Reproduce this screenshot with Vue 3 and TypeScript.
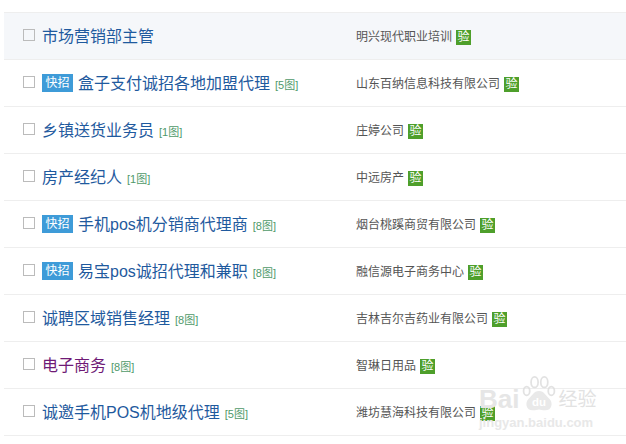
<template>
  <div class="page">
    <ul class="job-list">
      <li
        v-for="job in jobs"
        :key="job.title"
        class="job-row"
        :class="{ active: job.active }"
      >
        <div class="job-main">
          <span class="check"></span>
          <span v-if="job.quick" class="quick">快招</span>
          <a class="title" :class="{ visited: job.visited }">{{ job.title }}</a>
          <span v-if="job.pics" class="pics">[{{ job.pics }}图]</span>
        </div>
        <div class="job-company">
          <span class="company">{{ job.company }}</span>
          <span class="verified">验</span>
        </div>
      </li>
    </ul>

    <div class="watermark">
      <div class="wm-top">
        <span class="wm-bai">Bai</span>
        <svg class="wm-paw" width="36" height="37" viewBox="0 0 38 42">
          <g fill="none" stroke="#dedede" stroke-width="2">
            <ellipse cx="5" cy="17" rx="3.5" ry="5" />
            <ellipse cx="14" cy="7" rx="4" ry="6" />
            <ellipse cx="25" cy="7" rx="4" ry="6" />
            <ellipse cx="33" cy="17" rx="3.5" ry="5" />
          </g>
          <path d="M19 17c-6 0-8 6-12 9-4 4-3 13 5 13 3 0 5-1 7-1s4 1 7 1c8 0 9-9 5-13-4-3-6-9-12-9z" fill="#e6e6e6" />
          <text x="19" y="34" class="wm-du">du</text>
        </svg>
        <span class="wm-jy">经验</span>
      </div>
      <div class="wm-url">jingyan.baidu.com</div>
    </div>
  </div>
</template>

<script setup lang="ts">
interface Job {
  title: string
  company: string
  pics?: number
  quick?: boolean
  active?: boolean
  visited?: boolean
}

const jobs: Job[] = [
  { title: '市场营销部主管', company: '明兴现代职业培训', active: true },
  { title: '盒子支付诚招各地加盟代理', company: '山东百纳信息科技有限公司', pics: 5, quick: true },
  { title: '乡镇送货业务员', company: '庄婷公司', pics: 1 },
  { title: '房产经纪人', company: '中远房产', pics: 1 },
  { title: '手机pos机分销商代理商', company: '烟台桃蹊商贸有限公司', pics: 8, quick: true },
  { title: '易宝pos诚招代理和兼职', company: '融信源电子商务中心', pics: 8, quick: true },
  { title: '诚聘区域销售经理', company: '吉林吉尔吉药业有限公司', pics: 8 },
  { title: '电子商务', company: '智琳日用品', pics: 8, visited: true },
  { title: '诚邀手机POS机地级代理', company: '潍坊慧海科技有限公司', pics: 5 },
]
</script>

<style scoped>
.page {
  position: relative;
  width: 626px;
  height: 444px;
  padding-top: 12px;
  box-sizing: border-box;
  overflow: hidden;
  background: #fff;
  font-family: "Liberation Sans", "Noto Sans CJK SC", sans-serif;
}

.job-list {
  list-style: none;
  margin: 0 0 0 4px;
  padding: 0;
  border-top: 1px solid #eeeeee;
}

.job-row {
  display: flex;
  align-items: center;
  height: 46px;
  border-bottom: 1px solid #eeeeee;
}

.job-row.active {
  background: #f5f7fa;
}

.job-main {
  display: flex;
  align-items: center;
  width: 352px;
  padding-left: 19px;
  box-sizing: border-box;
}

.check {
  width: 10px;
  height: 10px;
  margin-right: 7px;
  border: 1px solid #bbbbbb;
  flex-shrink: 0;
  position: relative;
  top: -1px;
}

.quick {
  width: 31px;
  height: 18px;
  line-height: 18px;
  margin-right: 5px;
  text-align: center;
  font-size: 12px;
  color: #fff;
  background: #3e9bd8;
}

.title {
  font-size: 16px;
  line-height: 20px;
  color: #1f5a9e;
  position: relative;
  top: 1px;
}

.title.visited {
  color: #6f1a76;
}

.pics {
  margin-left: 5px;
  font-size: 11px;
  color: #4f9a6a;
  position: relative;
  top: 1px;
}

.job-company {
  display: flex;
  align-items: center;
}

.company {
  font-size: 12px;
  color: #555555;
  position: relative;
  top: -1px;
}

.verified {
  width: 15px;
  height: 15px;
  line-height: 15px;
  margin-left: 4px;
  text-align: center;
  font-size: 12px;
  color: #fff;
  background: #4e9f2b;
  position: relative;
  top: 1px;
}

.watermark {
  position: absolute;
  left: 479px;
  top: 375px;
  width: 147px;
  color: #e2e2e2;
  pointer-events: none;
}

.wm-top {
  display: flex;
  align-items: flex-end;
  height: 38px;
}

.wm-bai {
  font-size: 26px;
  font-weight: 700;
  line-height: 26px;
  color: #e6e6e6;
  margin-right: 2px;
  margin-bottom: 1px;
}

.wm-paw {
  margin-right: 1px;
  opacity: 0.85;
}

.wm-du {
  fill: #fff;
  font-size: 13px;
  font-weight: 700;
  text-anchor: middle;
}

.wm-jy {
  font-size: 19px;
  line-height: 24px;
  margin-bottom: 1px;
  color: #e2e2e2;
}

.wm-url {
  font-size: 13px;
  line-height: 14px;
  font-weight: 700;
  color: #e8e8e8;
  margin-top: 3px;
}
</style>
